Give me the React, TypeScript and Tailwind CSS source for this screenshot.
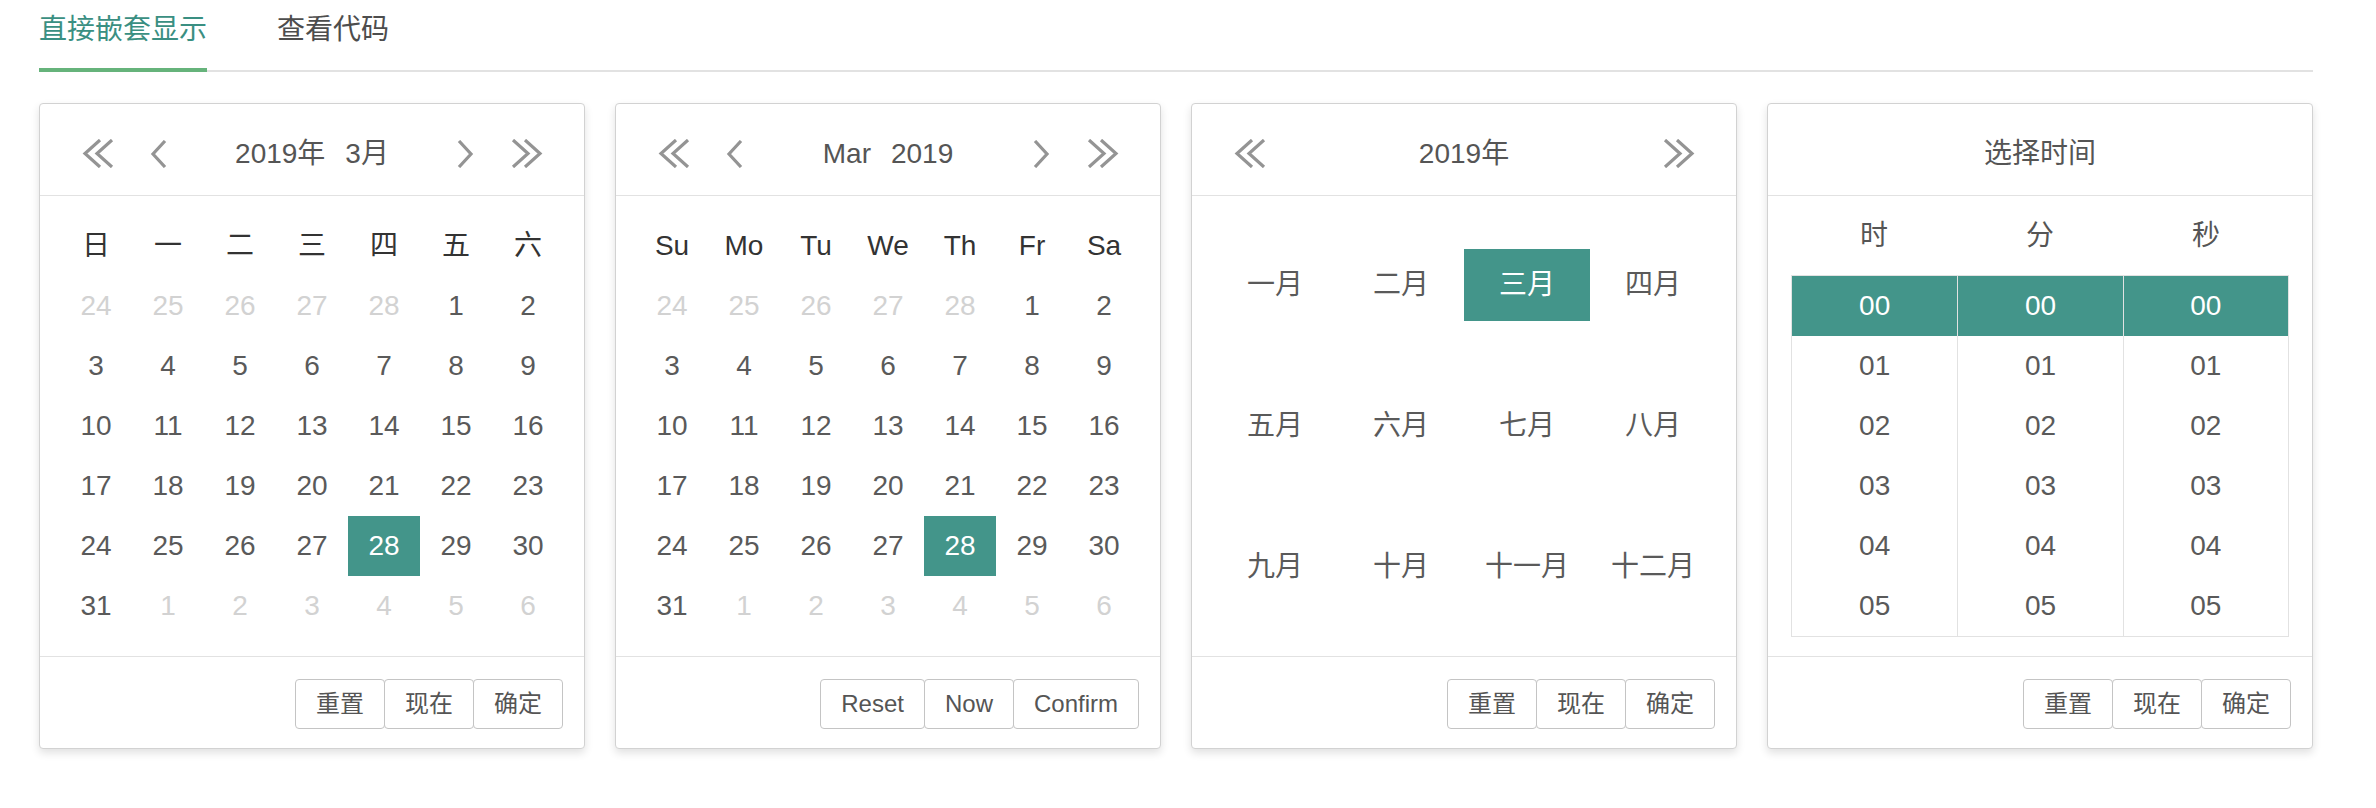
import type { ReactNode } from "react";

const font = "font-['Liberation_Sans','Noto_Sans_CJK_SC',sans-serif]";

function DoubleLeft() {
  return (
    <svg width="32" height="29" viewBox="0 0 32 29" fill="none" stroke="#949494" strokeWidth="3.2">
      <path d="M18 1 L3 14.5 L18 28" />
      <path d="M30 1 L15 14.5 L30 28" />
    </svg>
  );
}

function DoubleRight() {
  return (
    <svg width="32" height="29" viewBox="0 0 32 29" fill="none" stroke="#949494" strokeWidth="3.2">
      <path d="M2 1 L17 14.5 L2 28" />
      <path d="M14 1 L29 14.5 L14 28" />
    </svg>
  );
}

function Left() {
  return (
    <svg width="17" height="28" viewBox="0 0 17 28" fill="none" stroke="#949494" strokeWidth="3.2">
      <path d="M15 1 L3 14 L15 27" />
    </svg>
  );
}

function Right() {
  return (
    <svg width="17" height="28" viewBox="0 0 17 28" fill="none" stroke="#949494" strokeWidth="3.2">
      <path d="M2 1 L14 14 L2 27" />
    </svg>
  );
}

interface HeaderProps {
  children: ReactNode;
  year?: boolean;
  month?: boolean;
}

function Header({ children, year = true, month = true }: HeaderProps) {
  return (
    <div className="h-[92px] border-b border-[#e2e2e2] flex items-center px-[37px] pt-[8px]">
      <span className="w-[41px] flex justify-center">{year && <DoubleLeft />}</span>
      <span className="w-[41px] ml-[20px] flex justify-center">{month && <Left />}</span>
      <div className="flex-1 flex justify-center text-[28px] leading-[30px] text-[#555]">
        {children}
      </div>
      <span className="w-[41px] mr-[20px] flex justify-center">{month && <Right />}</span>
      <span className="w-[41px] flex justify-center">{year && <DoubleRight />}</span>
    </div>
  );
}

function Footer({ labels }: { labels: string[] }) {
  return (
    <div className="h-[92px] border-t border-[#e2e2e2] flex justify-end items-start pt-[22px] pr-[21px]">
      {labels.map((label, i) => (
        <button
          key={label}
          className={`h-[50px] px-[20px] border border-[#c4c4c4] rounded-[4px] bg-white text-[24px] leading-none text-[#555] ${
            i > 0 ? "-ml-px" : ""
          }`}
        >
          {label}
        </button>
      ))}
    </div>
  );
}

const days: { d: number; muted?: boolean }[] = [
  ...[24, 25, 26, 27, 28].map((d) => ({ d, muted: true })),
  ...Array.from({ length: 31 }, (_, i) => ({ d: i + 1 })),
  ...[1, 2, 3, 4, 5, 6].map((d) => ({ d, muted: true })),
];

function DateCard({ title, weekdays, buttons }: { title: ReactNode; weekdays: string[]; buttons: string[] }) {
  return (
    <div className="w-[546px] border border-[#d2d2d2] rounded-[4px] bg-white shadow-[0_4px_8px_rgba(0,0,0,0.12)]">
      <Header>{title}</Header>
      <div className="h-[460px] p-[20px]">
        <div className="grid grid-cols-7 text-[28px]">
          {weekdays.map((w) => (
            <div key={w} className="h-[60px] flex items-center justify-center text-[#333]">
              {w}
            </div>
          ))}
          {days.map((day, i) => {
            const selected = !day.muted && day.d === 28;
            return (
              <div
                key={i}
                className={`h-[60px] flex items-center justify-center ${
                  selected ? "bg-[#43958a] text-white" : day.muted ? "text-[#d2d2d2]" : "text-[#5a5a5a]"
                }`}
              >
                {day.d}
              </div>
            );
          })}
        </div>
      </div>
      <Footer labels={buttons} />
    </div>
  );
}

const months = ["一月", "二月", "三月", "四月", "五月", "六月", "七月", "八月", "九月", "十月", "十一月", "十二月"];

function MonthCard() {
  return (
    <div className="w-[546px] border border-[#d2d2d2] rounded-[4px] bg-white shadow-[0_4px_8px_rgba(0,0,0,0.12)]">
      <Header month={false}>
        <span>2019年</span>
      </Header>
      <div className="h-[460px] px-[20px] flex items-center">
        <div className="w-full grid grid-cols-4 gap-y-[69px] text-[28px]">
          {months.map((m) => (
            <div
              key={m}
              className={`h-[72px] flex items-center justify-center ${
                m === "三月" ? "bg-[#43958a] text-white" : "text-[#5a5a5a]"
              }`}
            >
              {m}
            </div>
          ))}
        </div>
      </div>
      <Footer labels={["重置", "现在", "确定"]} />
    </div>
  );
}

function TimeCard() {
  const values = ["00", "01", "02", "03", "04", "05"];
  return (
    <div className="w-[546px] border border-[#d2d2d2] rounded-[4px] bg-white shadow-[0_4px_8px_rgba(0,0,0,0.12)]">
      <div className="h-[92px] border-b border-[#e2e2e2] flex items-center justify-center pt-[8px] text-[28px] leading-[30px] text-[#555]">
        选择时间
      </div>
      <div className="h-[460px] px-[23px]">
        <div className="h-[79px] grid grid-cols-3 text-[28px] text-[#555]">
          {["时", "分", "秒"].map((t) => (
            <div key={t} className="flex items-center justify-center">
              {t}
            </div>
          ))}
        </div>
        <div className="grid grid-cols-3 border border-[#e2e2e2] text-[28px]">
          {[0, 1, 2].map((col) => (
            <div key={col} className={col > 0 ? "border-l border-[#e2e2e2]" : ""}>
              {values.map((v) => (
                <div
                  key={v}
                  className={`h-[60px] flex items-center justify-center ${
                    v === "00" ? "bg-[#43958a] text-white" : "text-[#5a5a5a]"
                  }`}
                >
                  {v}
                </div>
              ))}
            </div>
          ))}
        </div>
      </div>
      <Footer labels={["重置", "现在", "确定"]} />
    </div>
  );
}

export default function App() {
  return (
    <div className={`w-[2376px] h-[808px] bg-white pl-[39px] ${font}`}>
      <div className="w-[2274px] h-[72px] border-b-2 border-[#e2e2e2] flex gap-[70px] text-[28px]">
        <div className="relative h-[70px] leading-[60px] text-[#3a8f82]">
          直接嵌套显示
          <span className="absolute left-0 right-0 -bottom-[2px] h-[4px] bg-[#66b37b]" />
        </div>
        <div className="h-[70px] leading-[60px] text-[#4d4d4d]">查看代码</div>
      </div>

      <div className="mt-[31px] flex gap-[30px] items-start">
        <DateCard
          title={
            <>
              <span className="px-[10px]">2019年</span>
              <span className="px-[10px]">3月</span>
            </>
          }
          weekdays={["日", "一", "二", "三", "四", "五", "六"]}
          buttons={["重置", "现在", "确定"]}
        />
        <DateCard
          title={
            <>
              <span className="px-[10px]">Mar</span>
              <span className="px-[10px]">2019</span>
            </>
          }
          weekdays={["Su", "Mo", "Tu", "We", "Th", "Fr", "Sa"]}
          buttons={["Reset", "Now", "Confirm"]}
        />
        <MonthCard />
        <TimeCard />
      </div>
    </div>
  );
}
